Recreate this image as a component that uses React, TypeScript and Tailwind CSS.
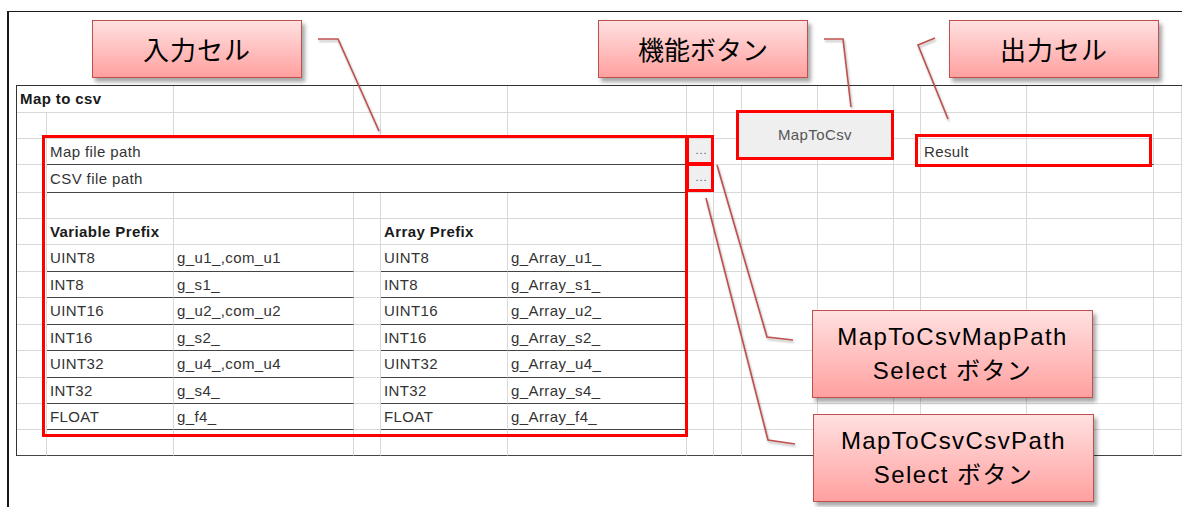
import React from "react";

type Cell = { span?: number; text?: string; bold?: boolean; dark?: boolean; btn?: boolean };

const blank = (n: number): Cell[] => Array.from({ length: n }, () => ({}));

const prefixes = [
  ["UINT8", "g_u1_,com_u1", "g_Array_u1_"],
  ["INT8", "g_s1_", "g_Array_s1_"],
  ["UINT16", "g_u2_,com_u2", "g_Array_u2_"],
  ["INT16", "g_s2_", "g_Array_s2_"],
  ["UINT32", "g_u4_,com_u4", "g_Array_u4_"],
  ["INT32", "g_s4_", "g_Array_s4_"],
  ["FLOAT", "g_f4_", "g_Array_f4_"],
];

const rows: Cell[][] = [
  [{ span: 2, text: "Map to csv", bold: true }, ...blank(12)],
  blank(14),
  [{}, { span: 5, text: "Map file path", dark: true }, { btn: true }, ...blank(4), { text: "Result", dark: true }, { dark: true }, {}],
  [{}, { span: 5, text: "CSV file path", dark: true }, { btn: true }, ...blank(7)],
  blank(14),
  [{}, { text: "Variable Prefix", bold: true }, {}, {}, { text: "Array Prefix", bold: true }, ...blank(9)],
  ...prefixes.map(([t, v, a]): Cell[] => [
    {},
    { text: t, dark: true },
    { text: v, dark: true },
    {},
    { text: t, dark: true },
    { text: a, dark: true },
    ...blank(8),
  ]),
  blank(14).map((c) => ({ ...c, dark: true })),
];

const spanClass: Record<number, string> = { 1: "", 2: "col-span-2", 5: "col-span-5" };

function SheetCell({ cell }: { cell: Cell }) {
  return (
    <div
      className={`flex items-center overflow-visible whitespace-nowrap border-r border-b border-r-[#d9d9d9] pl-[3px] pt-[1px] ${
        cell.dark ? "border-b-[#444]" : "border-b-[#d9d9d9]"
      } ${spanClass[cell.span ?? 1]} ${cell.btn ? "justify-center bg-[#efefef] pl-0" : ""} ${
        cell.bold ? "font-bold text-[#1a1a1a]" : "text-[#333]"
      }`}
    >
      {cell.btn ? <span className="text-[11px] leading-none tracking-[1px] text-[#3f5573] pb-[3px]">...</span> : cell.text}
    </div>
  );
}

function Callout({ className, children }: { className: string; children: React.ReactNode }) {
  return (
    <div
      className={`absolute flex flex-col items-center justify-center border-[1.5px] border-[#c0504d] bg-linear-to-b from-[#ffe0e0] to-[#ffa0a0] text-black shadow-[3px_4px_4px_rgba(0,0,0,0.35)] ${className}`}
    >
      {children}
    </div>
  );
}

export default function App() {
  return (
    <div className="relative w-[1182px] h-[507px] overflow-hidden bg-white font-['Liberation_Sans',sans-serif]">
      {/* page frame */}
      <div className="mt-[11px] ml-[7px] h-[496px] border-l-2 border-t border-[#1a1a1a] pt-[73px] pl-[7px]">
        <div
          className="grid grid-cols-[30px_127px_180px_27px_127px_179px_27px_28px_76px_76px_27px_106px_127px_28px] grid-rows-[27px_26px_26px_28px_26px_26px_27px_26px_27px_26px_27px_26px_26px_26px] w-[1166px] border-t border-l border-[#333] text-[15px] tracking-[0.4px]"
        >
          {rows.map((row, r) => row.map((cell, c) => <SheetCell key={`${r}-${c}`} cell={cell} />))}
        </div>
      </div>

      {/* form button */}
      <div className="absolute left-[736px] top-[110px] w-[158px] h-[50px] flex items-center justify-center border-[3px] border-[#ff0000] bg-[#efefef] text-[15px] tracking-[0.4px] text-[#555]">
        MapToCsv
      </div>

      {/* red highlight frames */}
      <div className="absolute left-[42px] top-[135px] w-[646px] h-[302px] border-[3px] border-[#ff0000]" />
      <div className="absolute left-[686px] top-[135px] w-[28px] h-[30px] border-[3px] border-[#ff0000]" />
      <div className="absolute left-[686px] top-[163px] w-[28px] h-[29px] border-[3px] border-[#ff0000]" />
      <div className="absolute left-[915px] top-[134px] w-[237px] h-[33px] border-[3px] border-[#ff0000]" />

      {/* leader lines */}
      <svg className="absolute inset-0 pointer-events-none drop-shadow-[1px_2px_1px_rgba(0,0,0,0.3)]" width="1182" height="507">
        <g fill="none" stroke="#c0504d" strokeWidth="1.6">
          <polyline points="318,39 338,39 379,131" />
          <polyline points="824,39 843,39 851,107" />
          <polyline points="935,38 918,45 948,119" />
          <polyline points="717,165 767,337 793,340" />
          <polyline points="706,198 768,440 795,444" />
        </g>
      </svg>

      {/* callouts */}
      <Callout className="left-[92px] top-[20px] w-[210px] h-[58px]">
        <span className="font-['Noto_Sans_CJK_JP',sans-serif] text-[26px] leading-none tracking-[1px]">入力セル</span>
      </Callout>
      <Callout className="left-[598px] top-[20px] w-[210px] h-[58px]">
        <span className="font-['Noto_Sans_CJK_JP',sans-serif] text-[26px] leading-none">機能ボタン</span>
      </Callout>
      <Callout className="left-[949px] top-[20px] w-[210px] h-[58px]">
        <span className="font-['Noto_Sans_CJK_JP',sans-serif] text-[26px] leading-none tracking-[1px]">出力セル</span>
      </Callout>
      <Callout className="left-[812px] top-[310px] w-[281px] h-[88px]">
        <span className="text-[24px] leading-[34px] tracking-[1.4px] font-['Liberation_Sans','Noto_Sans_CJK_JP',sans-serif]">MapToCsvMapPath</span>
        <span className="text-[24px] leading-[34px] tracking-[1.4px] font-['Liberation_Sans','Noto_Sans_CJK_JP',sans-serif]">Select ボタン</span>
      </Callout>
      <Callout className="left-[813px] top-[414px] w-[281px] h-[88px]">
        <span className="text-[24px] leading-[34px] tracking-[1.4px] font-['Liberation_Sans','Noto_Sans_CJK_JP',sans-serif]">MapToCsvCsvPath</span>
        <span className="text-[24px] leading-[34px] tracking-[1.4px] font-['Liberation_Sans','Noto_Sans_CJK_JP',sans-serif]">Select ボタン</span>
      </Callout>
    </div>
  );
}
